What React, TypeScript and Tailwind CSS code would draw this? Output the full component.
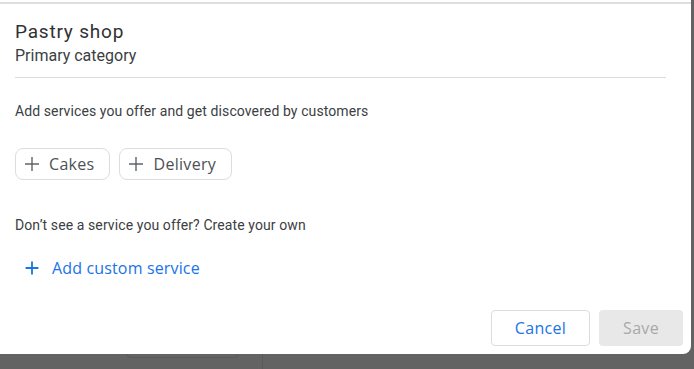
import React from "react";

const sans = { fontFamily: "'Open Sans', Roboto, sans-serif" };

function PlusIcon({ className, thin }: { className?: string; thin?: boolean }) {
  return (
    <svg viewBox="0 0 24 24" className={className} fill="currentColor" aria-hidden="true">
      {thin ? (
        <path d="M19 12.7h-6.3V19h-1.4v-6.3H5v-1.4h6.3V5h1.4v6.3H19z" />
      ) : (
        <path d="M19 13h-6v6h-2v-6H5v-2h6V5h2v6h6v2z" />
      )}
    </svg>
  );
}

function ServiceChip({ label }: { label: string }) {
  return (
    <button className="flex items-center h-[32px] pl-[4px] pr-[15px] gap-[5px] rounded-lg border border-[#dadce0] bg-white text-[#4d5156]">
      <PlusIcon thin className="w-[24px] h-[24px] text-[#5f6368]" />
      <span className="text-[16px] font-medium tracking-[0.3px]" style={sans}>
        {label}
      </span>
    </button>
  );
}

export default function App() {
  return (
    <div
      className="w-[694px] h-[369px] bg-[#636363] overflow-hidden"
      style={{ fontFamily: "Roboto, 'Liberation Sans', sans-serif" }}
    >
      {/* dialog */}
      <div className="w-[691px] h-[354px] bg-white rounded-br-lg flex flex-col">
        <div className="mt-[2px] h-[2px] bg-[#dedede]" />

        <div className="px-[15px] pt-[16px] flex flex-col flex-1">
          <div className="text-[19px] leading-[24px] tracking-[0.8px] text-[#303134]">Pastry shop</div>
          <div className="text-[16px] leading-[22px] text-[#3c4043] mt-[1px]">Primary category</div>
          <div className="mt-[10px] h-px w-[651px] bg-[#dadce0]" />

          <p className="mt-[23px] text-[14px] leading-[20px] tracking-[0.1px] text-[#3c4043]">
            Add services you offer and get discovered by customers
          </p>

          <div className="mt-[27px] flex gap-[9px]">
            <ServiceChip label="Cakes" />
            <ServiceChip label="Delivery" />
          </div>

          <p className="mt-[35px] text-[14px] leading-[20px] tracking-[0.1px] text-[#3c4043]">
            Don’t see a service you offer? Create your own
          </p>

          <button className="mt-[19px] ml-[6px] flex items-center gap-[9px] h-[28px] text-[#1a73e8]">
            <PlusIcon className="w-[22px] h-[22px]" />
            <span className="text-[16px] font-medium tracking-[0.15px]" style={sans}>
              Add custom service
            </span>
          </button>

          <div className="mt-auto mb-[8px] flex justify-end gap-[9px] mr-[-7px]">
            <button
              className="w-[99px] h-[36px] rounded border border-[#dadce0] bg-white text-[#1a73e8] text-[16px] font-medium tracking-[0.3px]"
              style={sans}
            >
              Cancel
            </button>
            <button
              className="w-[84px] h-[36px] rounded bg-[#e8e8e8] text-[#a8a8a8] text-[16px] font-medium tracking-[0.3px]"
              style={sans}
            >
              Save
            </button>
          </div>
        </div>
      </div>

      {/* page behind the scrim */}
      <div className="flex h-[15px]">
        <div className="ml-[127px] w-[111px] h-[4px] rounded-b-lg border-b border-x border-[#5a5a5a]" />
        <div className="ml-[24px] w-px h-full bg-[#5a5a5a]" />
      </div>
    </div>
  );
}
